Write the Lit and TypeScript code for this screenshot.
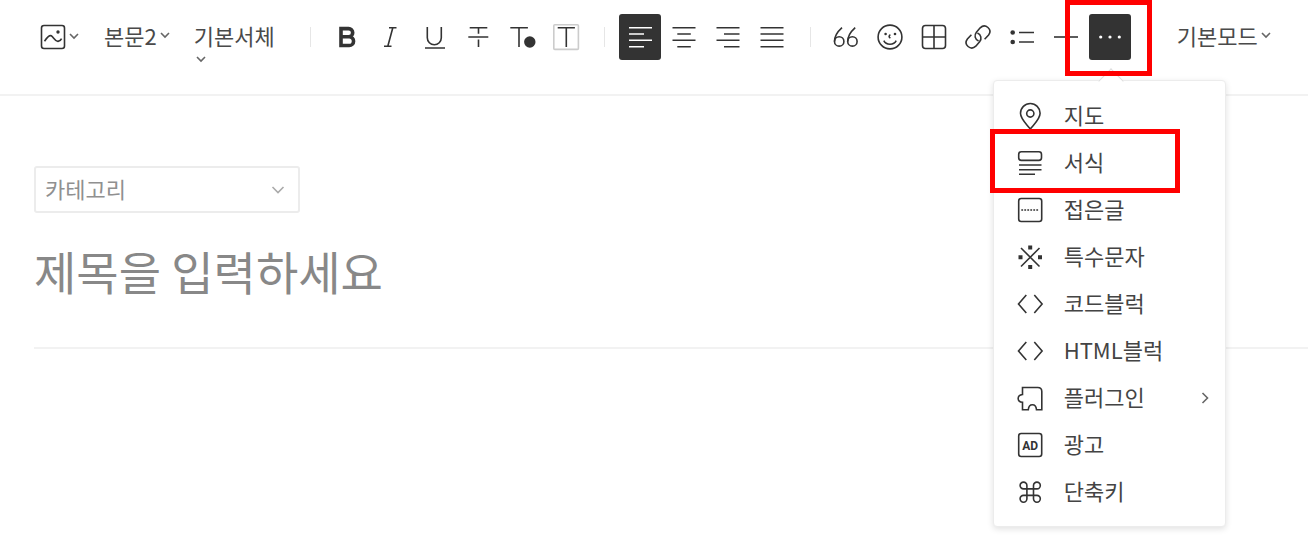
import { LitElement, html, svg, css, nothing } from "lit";
import { customElement, state } from "lit/decorators.js";

const ICONS: Record<string, unknown> = {
  image: svg`<rect x="1.5" y="1.5" width="23" height="23" rx="2.5"/><path d="M4.5 17.2C7 13.5 9.5 10.8 11.3 11.8C13.5 13 15 17.6 18 17.4Q20.5 17 21.6 14.6"/><circle class="solid" cx="18" cy="8" r="1.7"/>`,
  bold: svg`<path stroke-width="3.6" d="M8 4.6h7.6a4.1 4.1 0 0 1 0 8.2H8zM8 12.8h8.2a4.3 4.3 0 0 1 0 8.7H8z"/>`,
  italic: svg`<path d="M12 3.7h7.5M7 22.3h7.5M15.8 3.7l-5 18.6"/>`,
  underline: svg`<path d="M6.3 3v10.8a7 7 0 0 0 14 0V3M4 24h20"/>`,
  strike: svg`<path d="M4.7 3.7h17.6M3.3 13h20M13.5 3.7v6M13.5 15.5V23"/>`,
  color: svg`<path d="M1.3 3.7h17.6M10 3.7V23"/><circle class="solid" cx="20.8" cy="18" r="5.7"/>`,
  background: svg`<rect stroke="#ccc" x="0.8" y="0.8" width="24.6" height="24.6" rx="1"/><path d="M4.7 3.7h17.2M13.3 3.7V23"/>`,
  left: svg`<path d="M2 3.7h23M2 10h15M2 16.3h23M2 22.7h15"/>`,
  center: svg`<path d="M1.5 3.7h23M6.3 10h13.5M1.5 16.3h23M6.3 22.7h13.5"/>`,
  right: svg`<path d="M1.5 3.7h23M9 10h15.5M1.5 16.3h23M9 22.7h15.5"/>`,
  justify: svg`<path d="M1.5 3.7h23M1.5 10h23M1.5 16.3h23M1.5 22.7h23"/>`,
  quote: svg`<circle cx="6.2" cy="17.4" r="4.7"/><circle cx="19.4" cy="17.4" r="4.7"/><path d="M9 3.7Q1.5 10.5 1.5 17.4M22.2 3.7Q14.7 10.5 14.7 17.4"/>`,
  emoji: svg`<circle cx="13" cy="13" r="11.9"/><path d="M6.8 16.7Q8.5 20.3 13 20.3T19.2 16.7M13.4 10.6Q10.8 12.4 13.4 14.2"/><circle class="solid" cx="8.6" cy="10" r="1.3"/><circle class="solid" cx="18" cy="10" r="1.3"/>`,
  table: svg`<rect x="1.5" y="1.5" width="23" height="23" rx="3"/><path d="M13 1.5v23M1.5 13h23"/>`,
  link: svg`<path d="M13.6 17C9.8 15.4 9 11.2 11.4 8.2L15.2 3.8C20.4 -1 27.8 5.4 23.6 11L19.6 15.2"/><path d="M12.4 9C16.2 10.6 17 14.8 14.6 17.8L10.8 22.2C5.6 27 -1.8 20.6 2.4 15L6.4 10.8"/>`,
  list: svg`<circle class="solid" cx="3.7" cy="8.5" r="2.3"/><circle class="solid" cx="3.7" cy="18" r="2.3"/><path d="M10 8.5h15M10 18h15"/>`,
  rule: svg`<path d="M1 13h24"/>`,
  more: svg`<circle class="solid" cx="3.7" cy="13" r="1.6"/><circle class="solid" cx="13" cy="13" r="1.6"/><circle class="solid" cx="22.3" cy="13" r="1.6"/>`,
  map: svg`<path d="M13.3 26C9 20.5 3.5 16 3.5 10.3a9.8 9.8 0 0 1 19.6 0C23.1 16 17.6 20.5 13.3 26z"/><circle cx="13.3" cy="10.5" r="3.6"/>`,
  form: svg`<rect x="1.7" y="1.8" width="22.8" height="8.6" rx="2.6"/><path d="M2 15h22.5M2 19.7h22.5M2 24.3h16"/>`,
  fold: svg`<rect x="1.7" y="1.5" width="23" height="23" rx="2.5"/><path stroke-dasharray="1.8 1.2" d="M4.3 13h18"/>`,
  special: svg`<path d="M4 4l18.5 18.5M22.5 4L4 22.5"/><path class="fill" d="M11.2 1.5h4v4h-4zM11.2 21h4v4h-4zM1.5 11.2h4v4h-4zM21 11.2h4v4h-4z"/>`,
  code: svg`<path d="M9.3 4L1.5 13l7.8 9M17.3 4l7.8 9-7.8 9"/>`,
  plugin: svg`<path d="M5.5 2.5h15.3q4 0 4 4v18.3h-5.3C19 18 11.8 18 11.3 24.8H5.5V17.3C-0.3 16.5 -0.3 10.3 5.5 9.5z"/>`,
  ad: svg`<rect x="1.7" y="1.5" width="23" height="23" rx="2.5"/><text class="ad" x="13.2" y="17.5" text-anchor="middle">AD</text>`,
  command: svg`<path d="M16.5 6.5v13.3a3.4 3.4 0 1 0 3.4-3.4H6.5a3.4 3.4 0 1 0 3.4 3.4V6.5a3.4 3.4 0 1 0-3.4 3.4h13.4a3.4 3.4 0 1 0-3.4-3.4z"/>`,
};

const icon = (name: string) =>
  html`<svg class="icon" viewBox="0 0 26 26" width="26" height="26" aria-hidden="true">${ICONS[name]}</svg>`;

const chevron = (dir: "down" | "right" = "down") =>
  dir === "down"
    ? html`<svg class="chevron" viewBox="0 0 10 6" width="10" height="6" aria-hidden="true"><path d="M1 1l4 4 4-4"/></svg>`
    : html`<svg class="chevron" viewBox="0 0 8 12" width="8" height="12" aria-hidden="true"><path d="M1.5 1l5 5-5 5"/></svg>`;

const TEXT_TOOLS = [
  ["bold", "굵게"], ["italic", "기울임꼴"], ["underline", "밑줄"],
  ["strike", "취소선"], ["color", "글자색"], ["background", "배경색"],
];
const ALIGN_TOOLS = [
  ["left", "왼쪽 정렬"], ["center", "가운데 정렬"], ["right", "오른쪽 정렬"], ["justify", "양쪽 정렬"],
];
const INSERT_TOOLS = [
  ["quote", "인용구"], ["emoji", "이모티콘"], ["table", "표"],
  ["link", "링크"], ["list", "목록"], ["rule", "구분선"],
];
const MENU = [
  { icon: "map", label: "지도" },
  { icon: "form", label: "서식", marked: true },
  { icon: "fold", label: "접은글" },
  { icon: "special", label: "특수문자" },
  { icon: "code", label: "코드블럭" },
  { icon: "code", label: "HTML블럭" },
  { icon: "plugin", label: "플러그인", submenu: true },
  { icon: "ad", label: "광고" },
  { icon: "command", label: "단축키" },
];

@customElement("app-root")
export class AppRoot extends LitElement {
  @state() private align = "left";
  @state() private open = true;

  static styles = css`
    :host {
      display: block;
      min-height: 100vh;
      overflow: hidden;
      background: #fff;
      color: #333;
      font-family: "Noto Sans CJK KR", "Noto Sans", sans-serif;
      font-size: 22px;
    }
    * { box-sizing: border-box; }
    button, input, select {
      margin: 0;
      padding: 0;
      border: 0;
      background: none;
      color: inherit;
      font: inherit;
    }
    .icon, .chevron {
      display: block;
      flex: none;
      fill: none;
      stroke: currentColor;
      stroke-width: 1.6;
      overflow: visible;
    }
    .chevron { stroke: #666; }
    .solid, .fill { fill: currentColor; stroke: none; }
    .ad {
      fill: currentColor;
      stroke: none;
      font: bold 12px Roboto, "Liberation Sans", sans-serif;
    }
    .toolbar {
      display: flex;
      align-items: flex-start;
      height: 96px;
      padding: 14px 36px 0 40px;
      border-bottom: 2px solid #f2f2f2;
    }
    .drop {
      display: flex;
      align-items: center;
      gap: 3px;
      height: 42px;
      white-space: nowrap;
      color: #4a4a4a;
    }
    .picture { height: 46px; margin-right: 25px; color: #333; }
    .picture .chevron { margin-bottom: 3px; }
    .style { margin-right: 24px; }
    .font {
      flex-direction: column;
      align-items: flex-start;
      height: auto;
      line-height: 42px;
      gap: 0;
      margin-right: 18px;
    }
    .font .chevron { margin-left: 2px; }
    .mode { margin-left: 14px; }
    .group { display: flex; gap: 2px; }
    .tool {
      display: flex;
      align-items: center;
      justify-content: center;
      width: 42px;
      height: 46px;
      border-radius: 3px;
    }
    .tool.on { background: #333; color: #fff; }
    .divider {
      flex: none;
      width: 1px;
      height: 20px;
      margin: 13px 14px 0 17px;
      background: #e6e6e6;
    }
    .more { position: relative; }
    .frame {
      position: absolute;
      z-index: 2;
      border: 5px solid #f00;
      pointer-events: none;
    }
    .more > .frame { inset: -14px -21px -16px -24px; }
    .item > .frame { inset: -10px 45px -7px -4px; }
    .menu {
      position: absolute;
      z-index: 1;
      top: 66px;
      left: -96px;
      width: 233px;
      margin: 0;
      padding: 11px 0;
      list-style: none;
      background: #fff;
      border: 1px solid #ececec;
      border-radius: 4px;
      box-shadow: 0 2px 6px rgba(0, 0, 0, 0.12);
    }
    .menu::before {
      content: "";
      position: absolute;
      top: -9px;
      left: 108px;
      width: 17px;
      height: 17px;
      background: #fff;
      border: solid #ddd;
      border-width: 1px 0 0 1px;
      transform: rotate(45deg);
    }
    .item { position: relative; }
    .item button {
      display: flex;
      align-items: center;
      gap: 21px;
      width: 100%;
      height: 47px;
      padding: 0 16px 0 23px;
      text-align: left;
    }
    .item .label {
      flex: 1;
      padding-bottom: 4px;
      line-height: 42px;
      color: #444;
    }
    .head {
      margin-left: 34px;
      padding-top: 70px;
      border-bottom: 2px solid #f2f2f2;
    }
    .category {
      display: grid;
      align-items: center;
      width: 266px;
      color: #909090;
    }
    .category > * { grid-area: 1 / 1; }
    .category select {
      width: 100%;
      height: 47px;
      padding: 0 40px 4px 9px;
      appearance: none;
      border: 2px solid #ececec;
      border-radius: 3px;
    }
    .category .chevron {
      justify-self: end;
      margin-right: 16px;
      stroke: #aaa;
      pointer-events: none;
    }
    .title {
      display: block;
      width: 100%;
      height: 68px;
      margin: 23px 0 43px;
      font-size: 46px;
      outline: none;
    }
    .title::placeholder { color: #888; opacity: 1; }
  `;

  private tool(name: string, label: string, on = false, click?: () => void) {
    return html`<button type="button" class="tool ${on ? "on" : ""}" aria-label=${label} @click=${click}>${icon(name)}</button>`;
  }

  render() {
    return html`
      <div class="toolbar" role="toolbar" aria-label="편집 도구">
        <button type="button" class="drop picture" aria-label="첨부">${icon("image")}${chevron()}</button>
        <button type="button" class="drop style">본문2${chevron()}</button>
        <button type="button" class="drop font">기본서체${chevron()}</button>
        <span class="divider"></span>
        <div class="group">${TEXT_TOOLS.map(([n, l]) => this.tool(n, l))}</div>
        <span class="divider"></span>
        <div class="group">
          ${ALIGN_TOOLS.map(([n, l]) => this.tool(n, l, this.align === n, () => { this.align = n; }))}
        </div>
        <span class="divider"></span>
        <div class="group">
          ${INSERT_TOOLS.map(([n, l]) => this.tool(n, l))}
          <div class="more">
            ${this.tool("more", "더보기", this.open, () => { this.open = !this.open; })}
            ${this.open ? this.menu() : nothing}
            <span class="frame"></span>
          </div>
        </div>
        <span class="divider"></span>
        <button type="button" class="drop mode">기본모드${chevron()}</button>
      </div>
      <div class="head">
        <div class="category">
          <select aria-label="카테고리"><option>카테고리</option></select>
          <svg class="chevron" viewBox="0 0 12 8" width="12" height="8" aria-hidden="true"><path d="M0.5 1l5.5 5.5L11.5 1"/></svg>
        </div>
        <input class="title" type="text" aria-label="제목" placeholder="제목을 입력하세요">
      </div>
    `;
  }

  private menu() {
    return html`<ul class="menu">
      ${MENU.map((m) => html`<li class="item">
        <button type="button">${icon(m.icon)}<span class="label">${m.label}</span>${m.submenu ? chevron("right") : nothing}</button>
        ${m.marked ? html`<span class="frame"></span>` : nothing}
      </li>`)}
    </ul>`;
  }
}
